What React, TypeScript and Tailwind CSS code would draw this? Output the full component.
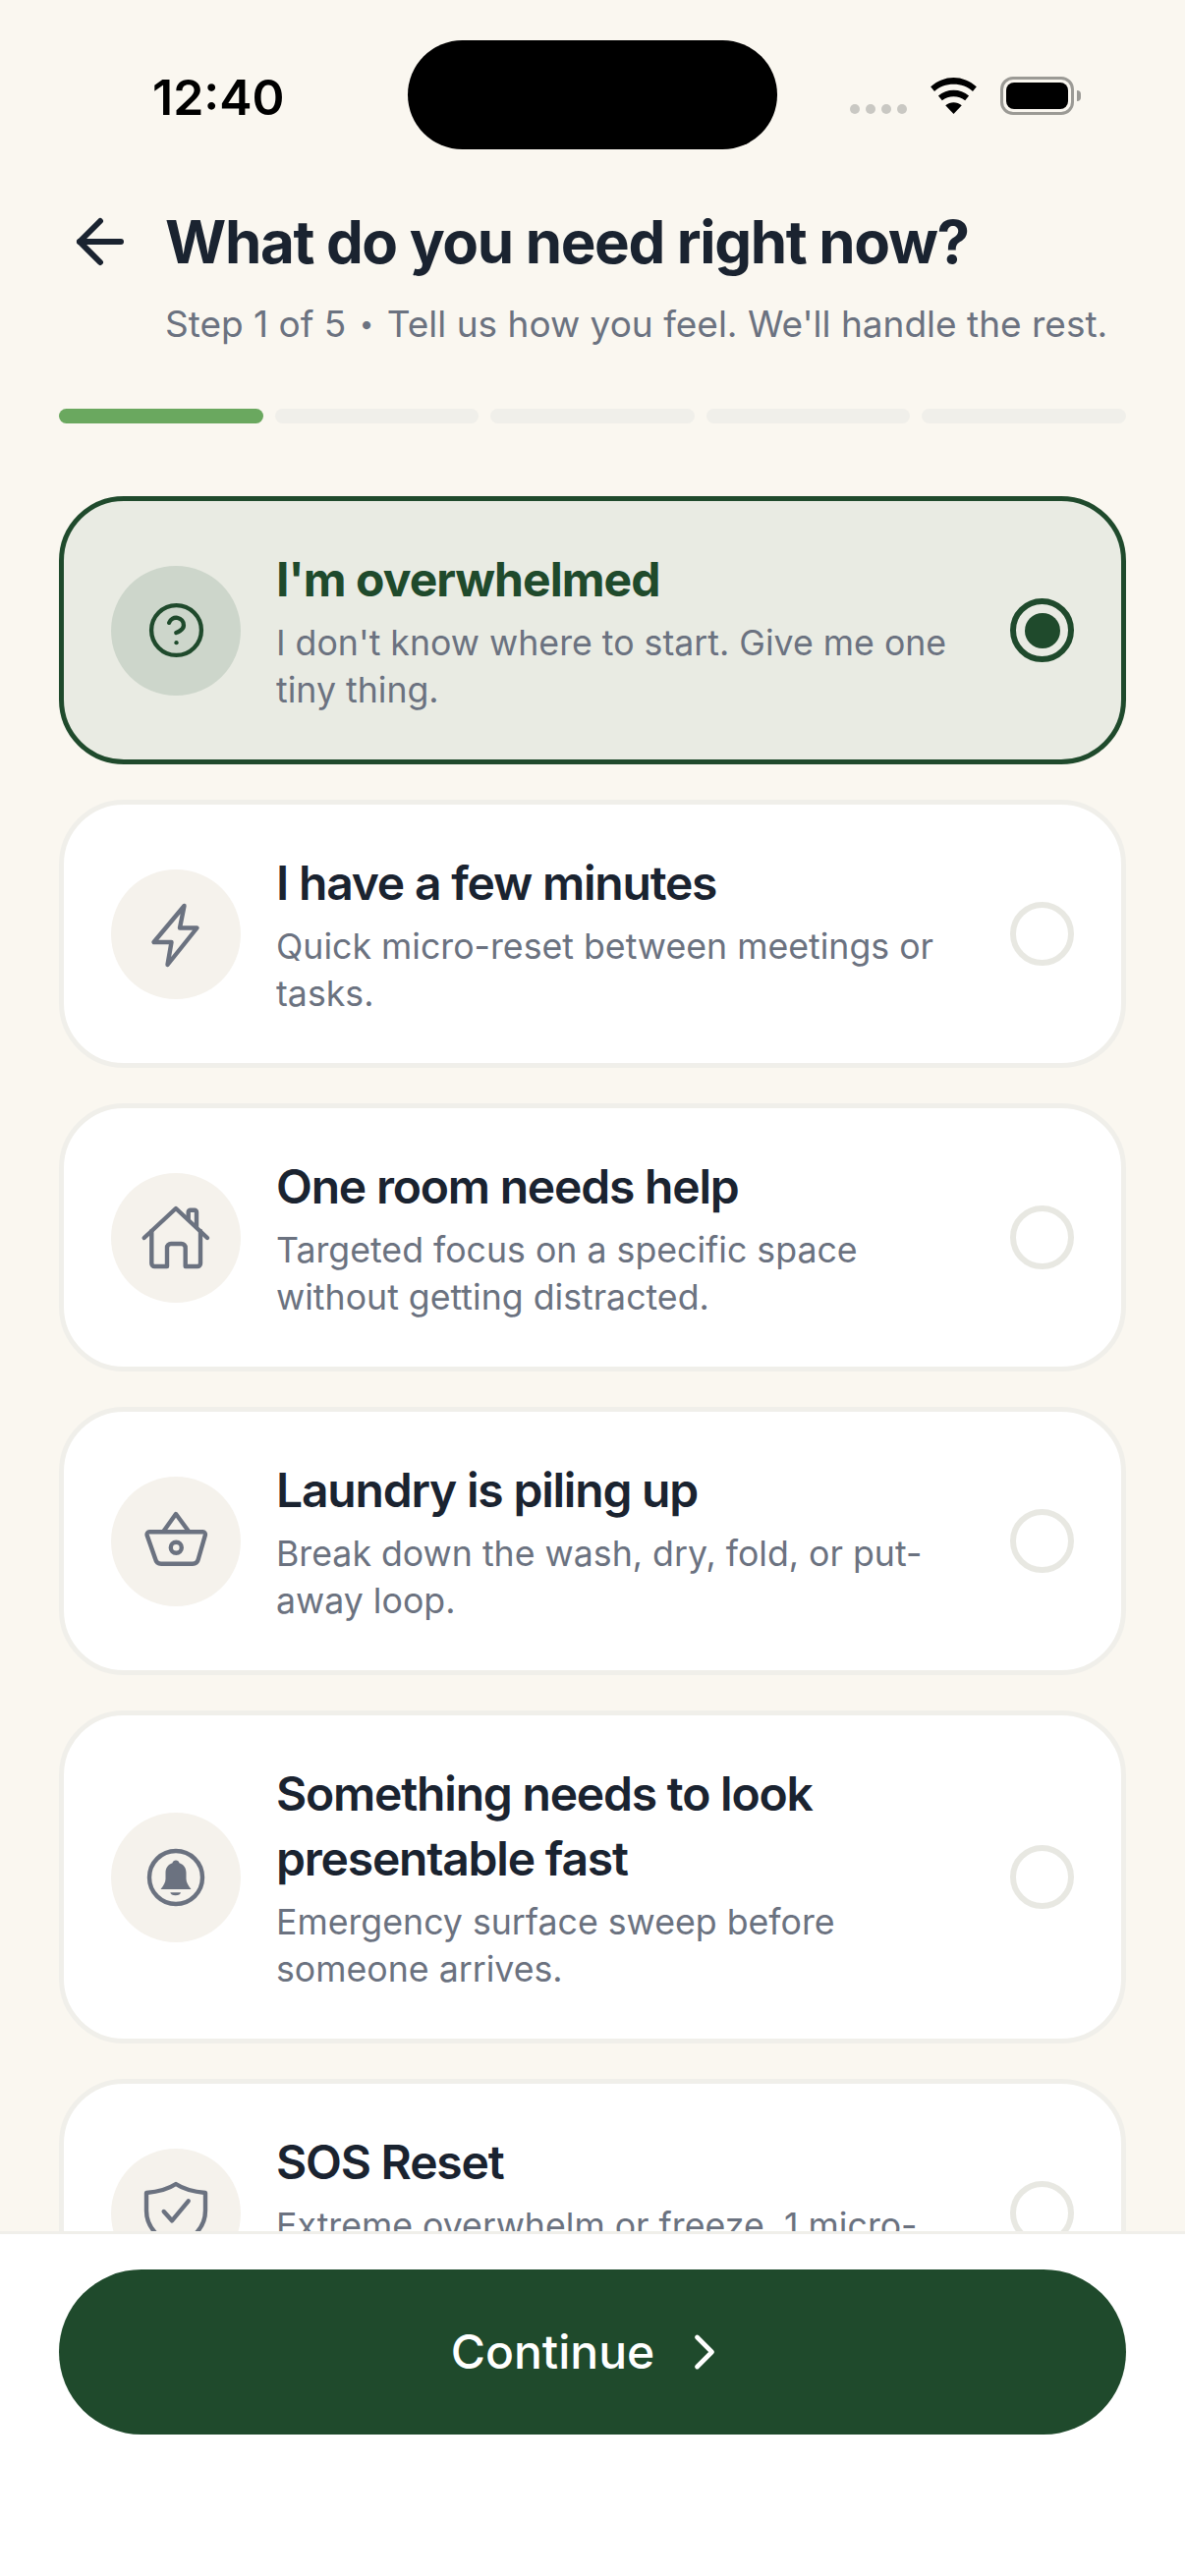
import { ArrowLeft, ChevronRight, CircleHelp } from 'lucide-react'
import type { ReactNode } from 'react'

// icons below are drawn on a 72px box to follow the picture
function Icon72({ children }: { children: ReactNode }) {
  return (
    <svg width="72" height="72" viewBox="0 0 72 72" fill="none" stroke="currentColor" strokeWidth="4.4" strokeLinecap="round" strokeLinejoin="round">
      {children}
    </svg>
  )
}

function ZapIcon() {
  return (
    <Icon72>
      <path d="M44.500 7 13.500 44H31.500L27.500 67 57.500 29.500H40Z" />
    </Icon72>
  )
}

function HouseIcon() {
  return (
    <Icon72>
      <path d="M3.700 36 36 6 68 36" />
      <path d="M11.300 29V62a3 3 0 0 0 3 3H27V46a4 4 0 0 1 4-4h10.700a4 4 0 0 1 4 4V65H58a3 3 0 0 0 3-3V29" />
      <path d="M48.700 17V9.700a2 2 0 0 1 2-2H55a2 2 0 0 1 2 2V25" />
    </Icon72>
  )
}

function BasketIcon() {
  return (
    <Icon72>
      <path d="M9 26.300H63.500a2.500 2.500 0 0 1 2.400 3.100L58.800 54a6 6 0 0 1-5.800 4.700H21a6 6 0 0 1-5.800-4.700L6.600 29.400A2.500 2.500 0 0 1 9 26.300Z" />
      <path d="M23.700 25.300 36 8 48.700 25.300" />
      <circle cx="36.300" cy="42.300" r="5.500" />
    </Icon72>
  )
}

function BellIcon() {
  return (
    <Icon72>
      <circle cx="36" cy="36" r="27" />
      <path
        d="M36 18.500c-1.800 0-3 1-3.500 2.800-4.500 1.500-7 5.200-7 10v6.200c0 3.500-2 6.500-5 10.500h31c-3-4-5-7-5-10.500v-6.200c0-4.800-2.500-8.500-7-10-.5-1.800-1.700-2.800-3.500-2.800Z"
        fill="currentColor"
        stroke="none"
      />
      <path d="M30.300 51.300h10.700a5.400 3.400 0 0 1-10.700 0Z" fill="currentColor" stroke="none" />
    </Icon72>
  )
}

function ShieldIcon() {
  return (
    <Icon72>
      <path d="M36 6C27 12 17 14 6 15V33C6 50 18 62 36 68 54 62 66 50 66 33V15C55 14 45 12 36 6Z" />
      <path d="M23.700 34 32 43.300 48.700 23.300" />
    </Icon72>
  )
}

type Option = {
  title: string
  desc: string
  icon: ReactNode
  selected?: boolean
}

const options: Option[] = [
  { title: "I'm overwhelmed", desc: "I don't know where to start. Give me one tiny thing.", icon: <CircleHelp size={61} strokeWidth={1.7} />, selected: true },
  { title: 'I have a few minutes', desc: 'Quick micro-reset between meetings or tasks.', icon: <ZapIcon /> },
  { title: 'One room needs help', desc: 'Targeted focus on a specific space without getting distracted.', icon: <HouseIcon /> },
  { title: 'Laundry is piling up', desc: 'Break down the wash, dry, fold, or put-away loop.', icon: <BasketIcon /> },
  { title: 'Something needs to look presentable fast', desc: 'Emergency surface sweep before someone arrives.', icon: <BellIcon /> },
  { title: 'SOS Reset', desc: 'Extreme overwhelm or freeze. 1 micro-step at a time, nothing more.', icon: <ShieldIcon /> },
]

function OptionCard({ option }: { option: Option }) {
  const selected = option.selected
  return (
    <div className={`flex shrink-0 items-center rounded-[66px] border-[5px] px-[48px] py-[47px] ${selected ? 'border-[#1f4a2c] bg-[#e9ebe3]' : 'border-[#f0efea] bg-white'}`}>
      <div className={`flex h-[132px] w-[132px] shrink-0 items-center justify-center rounded-full ${selected ? 'bg-[#cdd6cb] text-[#1f4a2c]' : 'bg-[#f5f2ec] text-[#6b7280]'}`}>
        {option.icon}
      </div>
      <div className="ml-[36px] min-w-0 flex-1 pr-[36px]">
        <div className={`text-[48px] leading-[66px] ${selected ? 'font-bold tracking-[-0.96px] text-[#1f4a2c]' : 'font-semibold tracking-[-1.2px] text-[#1a2330]'}`}>{option.title}</div>
        <div className="mt-[7px] text-[35.7px] leading-[48px] text-[#6b7280]">{option.desc}</div>
      </div>
      <div className={`flex h-[65px] w-[65px] shrink-0 items-center justify-center rounded-full border-[6px] ${selected ? 'border-[#1f4a2c]' : 'border-[#e8e8e2]'}`}>
        {selected && <div className="h-[36px] w-[36px] rounded-full bg-[#1f4a2c]" />}
      </div>
    </div>
  )
}

export default function App() {
  return (
    <div className="flex h-[2622px] w-[1206px] flex-col overflow-hidden bg-[#faf7f0] font-['Inter',sans-serif]">
      {/* Status bar */}
      <div className="flex h-[152px] shrink-0 items-start pt-[41px]">
        <div className="w-[415px] pl-[155px] pt-[25px] text-[50px] font-semibold leading-[66px] text-black">12:40</div>
        <div className="h-[111px] w-[376px] rounded-full bg-black" />
        <div className="ml-[74px] mt-[65px] flex gap-[6px]">
          <span className="h-[10px] w-[10px] rounded-full bg-[#c9c8c3]" />
          <span className="h-[10px] w-[10px] rounded-full bg-[#c9c8c3]" />
          <span className="h-[10px] w-[10px] rounded-full bg-[#c9c8c3]" />
          <span className="h-[10px] w-[10px] rounded-full bg-[#c9c8c3]" />
        </div>
        <svg className="ml-[22px] mt-[38px]" width="51" height="37" viewBox="0 0 50 38" fill="black">
          <path d="M25 0c9 0 17 3.500 24 9.500l-4 5C39.500 9.500 33 7 25 7S10.500 9.500 5 14.500l-4-5C8 3.500 16 0 25 0Z" />
          <path d="M25 13c6 0 11.500 2 16 6l-4 5c-3.500-2.800-7.500-4.200-12-4.200S16.500 21.200 13 24l-4-5c4.500-4 10-6 16-6Z" />
          <path d="M25 26c3 0 6 1 8.500 3L25 38l-8.500-9c2.500-2 5.500-3 8.500-3Z" />
        </svg>
        <div className="ml-[22px] mt-[37px] flex items-center">
          <div className="h-[39px] w-[75px] rounded-[13px] border-[3px] border-[#9b9a95] p-[3px]">
            <div className="h-full w-full rounded-[8px] bg-black" />
          </div>
          <div className="ml-[3px] h-[11px] w-[4px] rounded-r-full bg-[#9b9a95]" />
        </div>
      </div>

      {/* Header */}
      <div className="mt-[58px] flex shrink-0 items-center pl-[66px]">
        <ArrowLeft size={72} strokeWidth={2} className="text-[#1a2330]" />
        <h1 className="ml-[30px] text-[60px] font-bold leading-[72px] tracking-[-1.35px] text-[#1a2330]">What do you need right now?</h1>
      </div>
      <p className="mt-[21px] h-[54px] shrink-0 pl-[168px] text-[37px] leading-[54px] text-[#6b7280]">
        Step 1 of 5 <span className="mx-[3px] align-[4px] text-[26px] leading-none">•</span> Tell us how you feel. We'll handle the rest.
      </p>

      {/* Progress */}
      <div className="mt-[59px] flex shrink-0 gap-[12px] px-[60px]">
        <div className="h-[15px] flex-1 rounded-full bg-[#6aa85f]" />
        <div className="h-[15px] flex-1 rounded-full bg-[#f0efea]" />
        <div className="h-[15px] flex-1 rounded-full bg-[#f0efea]" />
        <div className="h-[15px] flex-1 rounded-full bg-[#f0efea]" />
        <div className="h-[15px] flex-1 rounded-full bg-[#f0efea]" />
      </div>

      {/* Options */}
      <div className="mt-[74px] flex min-h-0 flex-1 flex-col gap-[36px] overflow-hidden px-[60px]">
        {options.map((option) => (
          <OptionCard key={option.title} option={option} />
        ))}
      </div>

      {/* Footer */}
      <div className="h-[351px] shrink-0 border-t-[3px] border-[#f0efea] bg-white px-[60px] pt-[36px]">
        <button className="flex h-[168px] w-full items-center justify-center gap-[21px] rounded-full bg-[#1f4a2c] text-[48px] font-medium text-white">
          Continue
          <ChevronRight size={60} strokeWidth={1.9} />
        </button>
      </div>
    </div>
  )
}
